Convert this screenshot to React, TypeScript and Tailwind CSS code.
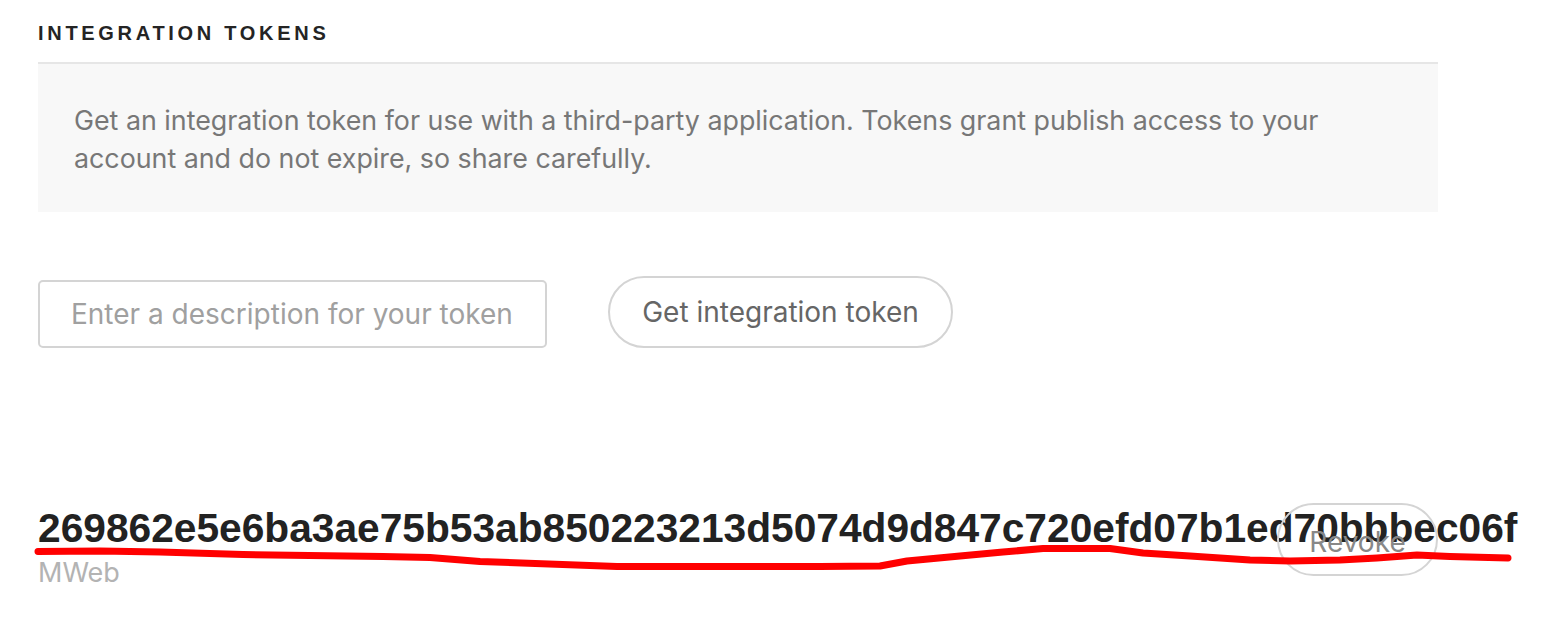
export default function App() {
  const pts =
    "38,551.5 100,551 160,552 243,554.5 383,556.5 430,557.5 480,561.5 617,566.5 820,566.5 880,566 907,561 960,556 1003,552 1043,548.5 1110,548.5 1143,553 1190,556 1250,560 1290,561 1340,560 1377,558 1417,555 1450,556.5 1508,558";
  return (
    <div className="relative w-[1548px] h-[644px] bg-white overflow-hidden font-['Liberation_Sans',Arial,sans-serif]">
      <div className="pl-[38px] pt-[23px]">
        <h2 className="text-[20px] leading-[20px] font-bold tracking-[3.7px] text-[#242424]">
          INTEGRATION TOKENS
        </h2>
        <div className="mt-[19px] w-[1400px] h-[150px] border-t-2 border-[#e6e6e6] bg-[#f8f8f8] pl-[36px] pt-[37px]">
          <p className="font-['Inter',sans-serif] text-[26.8px] leading-[38px] text-[#777777] w-[1310px]">
            Get an integration token for use with a third-party application. Tokens grant publish access to your
            account and do not expire, so share carefully.
          </p>
        </div>
        <div className="mt-[64px] flex items-end gap-[61px] font-['Inter',sans-serif]">
          <input
            className="w-[509px] h-[68px] border-2 border-[#d4d4d4] rounded-[5px] px-[31px] text-[28px] text-[#333] placeholder:text-[#a0a0a0] outline-none"
            placeholder="Enter a description for your token"
          />
          <button className="w-[345px] h-[72px] rounded-full border-2 border-[#d4d4d4] text-[28px] text-[#666666] bg-white">
            Get integration token
          </button>
        </div>
        <div className="mt-[155px] w-[1400px] flex items-start">
          <div className="flex-1 min-w-0 pt-[3px]">
            <div className="whitespace-nowrap text-[40.7px] leading-[44px] font-bold text-[#222222]">
              269862e5e6ba3ae75b53ab850223213d5074d9d847c720efd07b1ed70bbbec06f
            </div>
            <div className="mt-[8px] font-['Inter',sans-serif] text-[27px] leading-[30px] text-[#b3b3b3]">MWeb</div>
          </div>
          <button className="shrink-0 w-[161px] h-[73px] rounded-full border-2 border-[#d4d4d4] font-['Inter',sans-serif] text-[28px] text-[#888888] bg-transparent pt-[4px]">
            Revoke
          </button>
        </div>
      </div>
      <svg
        className="absolute left-0 top-0 pointer-events-none"
        width="1548"
        height="644"
        viewBox="0 0 1548 644"
      >
        <polyline
          points={pts}
          fill="none"
          stroke="#ff0000"
          strokeWidth="7"
          strokeLinecap="round"
          strokeLinejoin="round"
        />
      </svg>
    </div>
  );
}
